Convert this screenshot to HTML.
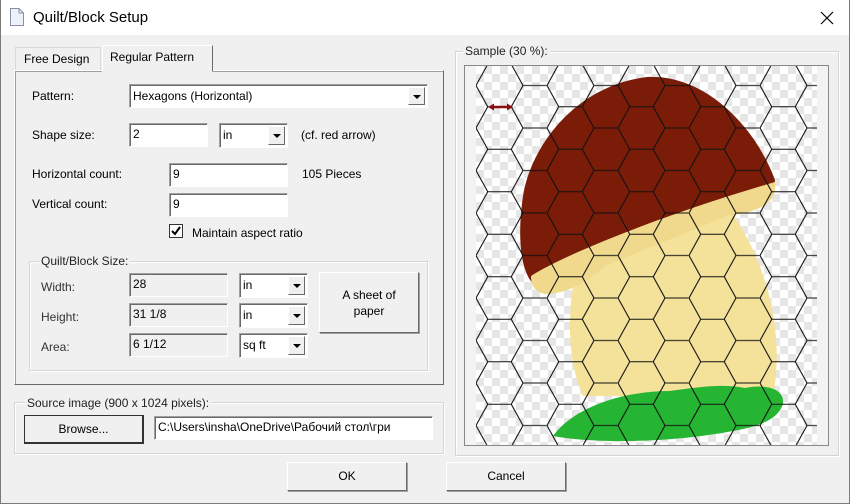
<!DOCTYPE html>
<html><head><meta charset="utf-8"><style>
*{box-sizing:border-box;margin:0;padding:0}
body{width:850px;height:504px;overflow:hidden;background:#f0f0f0;font-family:"Liberation Sans",sans-serif;font-size:12px;color:#000;position:relative}
.a{position:absolute;white-space:nowrap}
.win{position:absolute;left:0;top:0;width:850px;height:504px;border:1px solid #7a7a7a;border-top:none}
.title{position:absolute;left:0;top:0;width:850px;height:35px;background:#fff;border-left:1px solid #7a7a7a;border-right:1px solid #7a7a7a}
.edit{position:absolute;background:#fff;border:1px solid;border-color:#a0a0a0 #fff #fff #a0a0a0;box-shadow:inset 1px 1px 0 #696969;padding:2px 3px;line-height:17px}
.dis{background:#f0f0f0}
.combo{position:absolute;background:#fff;border:1px solid;border-color:#a0a0a0 #fff #fff #a0a0a0;box-shadow:inset 1px 1px 0 #696969;padding:3px 3px;line-height:16px}
.arr{position:absolute;right:2px;top:2px;bottom:2px;width:17px;background:#f0f0f0;border:1px solid;border-color:#fff #696969 #696969 #fff}
.arr:after{content:"";position:absolute;left:4px;top:7px;border-left:4px solid transparent;border-right:4px solid transparent;border-top:4px solid #000}
.btn{position:absolute;background:#f0f0f0;border:1px solid;border-color:#fff #696969 #696969 #fff;box-shadow:1px 1px 0 #a0a0a0;text-align:center}
.grp{position:absolute;border:1px solid #d5d5d5;box-shadow:inset 1px 1px 0 #fff,1px 1px 0 #fff}
.gl{position:absolute;background:#f0f0f0;padding:0 2px;color:#222}
</style></head><body>
<div class="title"></div>
<div class="win"></div>
<svg class="a" style="left:9px;top:7px" width="16" height="20"><path d="M1.5 1.5H10L14.5 6V18.5H1.5Z" fill="#eef0fa" stroke="#8a8fa8"/><path d="M10 1.5V6H14.5" fill="none" stroke="#8a8fa8"/></svg>
<div class="a" style="left:33px;top:9px;font-size:15px">Quilt/Block Setup</div>
<svg class="a" style="left:820px;top:11px" width="14" height="14"><path d="M1 1L13 13M13 1L1 13" stroke="#000" stroke-width="1.2"/></svg>

<div class="a" style="left:15px;top:47px;width:86px;height:24px;border:1px solid #d9d9d9;border-bottom:none;background:#f0f0f0"></div>
<div class="a" style="left:24px;top:52px">Free Design</div>
<div class="a" style="left:14px;top:70px;width:430px;height:315px;border:1px solid;border-color:#fff #696969 #696969 #fff;box-shadow:1px 1px 0 #a0a0a0 inset"></div>
<div class="a" style="left:102px;top:45px;width:111px;height:27px;border:1px solid;border-color:#fff #696969 transparent #fff;background:#f0f0f0"></div>
<div class="a" style="left:110px;top:50px">Regular Pattern</div>

<div class="a" style="left:32px;top:89px">Pattern:</div>
<div class="combo" style="left:129px;top:84px;width:299px;height:24px">Hexagons (Horizontal)<div class="arr"></div></div>

<div class="a" style="left:32px;top:128px">Shape size:</div>
<div class="edit" style="left:129px;top:123px;width:79px;height:24px">2</div>
<div class="combo" style="left:219px;top:123px;width:69px;height:25px">in<div class="arr"></div></div>
<div class="a" style="left:301px;top:128px">(cf. red arrow)</div>

<div class="a" style="left:32px;top:167px">Horizontal count:</div>
<div class="edit" style="left:169px;top:163px;width:119px;height:24px">9</div>
<div class="a" style="left:302px;top:167px">105 Pieces</div>
<div class="a" style="left:32px;top:197px">Vertical count:</div>
<div class="edit" style="left:169px;top:193px;width:119px;height:24px">9</div>
<div class="a" style="left:169px;top:224px;width:14px;height:14px;background:#fff;border:1px solid #333"></div>
<svg class="a" style="left:171px;top:226px" width="10" height="10"><path d="M1 5L4 8L9 1" fill="none" stroke="#000" stroke-width="2"/></svg>
<div class="a" style="left:192px;top:226px">Maintain aspect ratio</div>

<div class="grp" style="left:29px;top:261px;width:399px;height:110px"></div>
<div class="gl" style="left:39px;top:254px">Quilt/Block Size:</div>
<div class="a" style="left:41px;top:280px;color:#333">Width:</div>
<div class="edit dis" style="left:129px;top:273px;width:99px;height:24px">28</div>
<div class="combo" style="left:239px;top:273px;width:69px;height:25px">in<div class="arr"></div></div>
<div class="a" style="left:41px;top:310px;color:#333">Height:</div>
<div class="edit dis" style="left:129px;top:303px;width:99px;height:24px">31 1/8</div>
<div class="combo" style="left:239px;top:303px;width:69px;height:25px">in<div class="arr"></div></div>
<div class="a" style="left:41px;top:340px;color:#333">Area:</div>
<div class="edit dis" style="left:129px;top:333px;width:99px;height:24px">6 1/12</div>
<div class="combo" style="left:239px;top:333px;width:69px;height:25px">sq ft<div class="arr"></div></div>
<div class="btn" style="left:319px;top:272px;width:100px;height:61px;padding-top:14px;line-height:16px">A sheet of<br>paper</div>

<div class="grp" style="left:14px;top:402px;width:430px;height:52px"></div>
<div class="gl" style="left:25px;top:396px">Source image (900 x 1024 pixels):</div>
<div class="btn" style="left:24px;top:415px;width:120px;height:29px;line-height:27px;border-color:#333;box-shadow:none;border-width:1px 2px 2px 1px">Browse...</div>
<div class="edit" style="left:154px;top:416px;width:279px;height:24px;overflow:hidden">C:\Users\insha\OneDrive\Рабочий стол\гри</div>

<div class="btn" style="left:287px;top:462px;width:120px;height:29px;line-height:27px">OK</div>
<div class="btn" style="left:446px;top:462px;width:120px;height:29px;line-height:27px">Cancel</div>

<div class="grp" style="left:455px;top:51px;width:384px;height:405px"></div>
<div class="gl" style="left:463px;top:44px">Sample (30 %):</div>
<div class="a" style="left:464px;top:65px;width:365px;height:381px;border:1px solid #888;background:#f3f3f3"></div>
<div class="a" style="left:476px;top:66px;width:341px;height:379px;background-color:#fff;background-image:repeating-conic-gradient(#e6e6e6 0 25%,#fff 0 50%);background-size:16px 16px"></div>
<svg class="a" style="left:465px;top:66px" width="363" height="379">
<defs>
<pattern id="hx" patternUnits="userSpaceOnUse" x="11" y="40.75" width="71" height="42.5">
<path d="M0,21.25 L11.75,0 L35.25,0 L47,21.25 L35.25,42.5 L11.75,42.5 Z M47,21.25 L71,21.25" fill="none" stroke="#111" stroke-width="1.1"/>
</pattern>
</defs>
<path d="M112,200 C100,250 104,300 118,330 L308,330 C318,280 310,200 255,130 Z" fill="#f4e29a"/>
<path d="M72,221 C55,210 52,170 58,130 C66,80 110,20 182,11 C240,8 290,60 310,114 L308,128 C250,145 140,180 95,215 C88,222 80,224 72,221 Z" fill="#7a1c08"/>
<path d="M66,210 C100,188 200,148 310,116 C312,135 300,145 262,150 L140,200 C120,218 100,228 80,228 C70,226 66,220 66,210 Z" fill="#f0d98c"/>
<path d="M88,370 C110,340 160,325 205,325 C240,320 260,318 280,322 C300,318 320,322 318,338 C312,356 290,362 250,368 C200,376 130,378 88,370 Z" fill="#25b533"/>
<rect x="11" y="0" width="341" height="379" fill="url(#hx)"/>
<path d="M27,41H44" stroke="#8a0e0e" stroke-width="2.5"/><path d="M23,41L29,37.5V44.5Z M48,41L42,37.5V44.5Z" fill="#8a0e0e"/>
</svg>
</body></html>
